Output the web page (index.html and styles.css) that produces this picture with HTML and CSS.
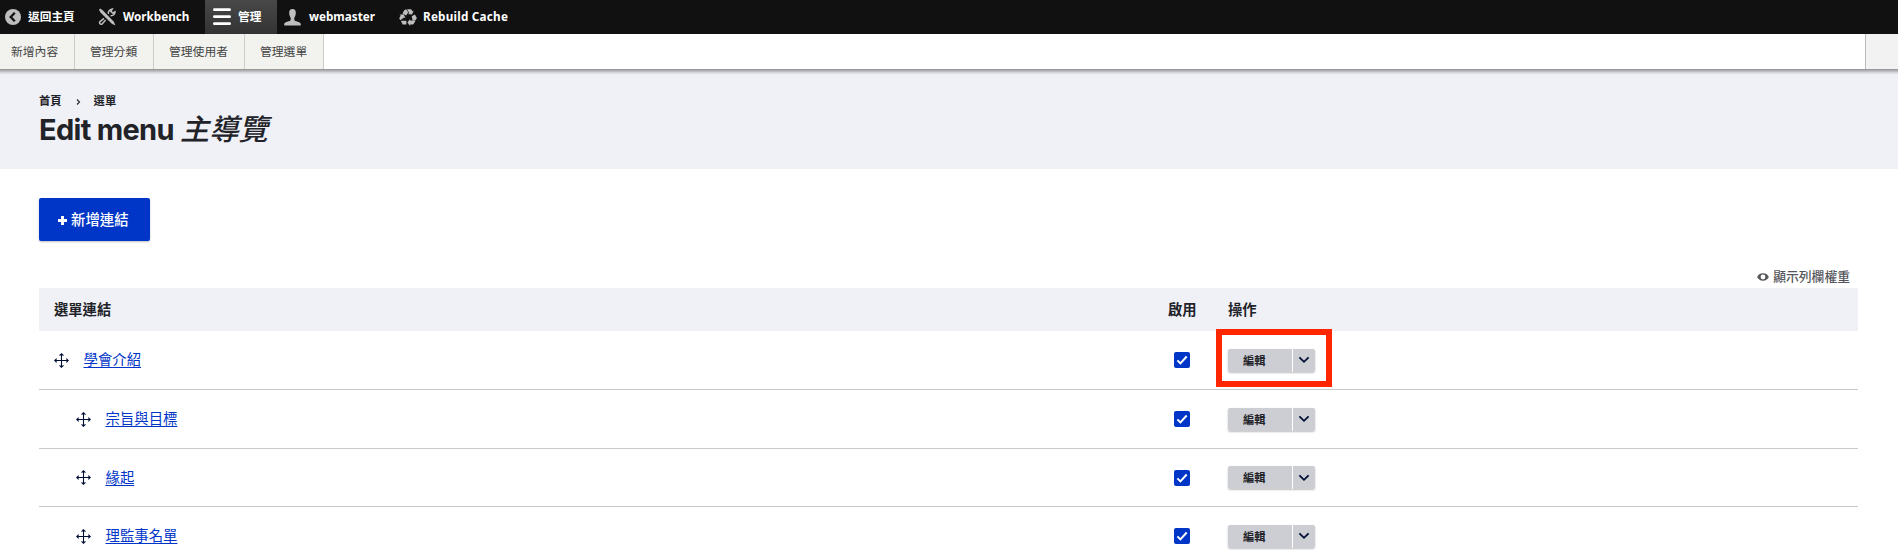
FILE: index.html
```
<!DOCTYPE html>
<html lang="zh-Hant">
<head>
<meta charset="utf-8">
<title>Edit menu 主導覽</title>
<link rel="stylesheet" href="styles.css">
</head>
<body>
<svg class="defs" width="0" height="0">
  <symbol id="move" viewBox="0 0 16 16"><path d="M8 .9v14.2M.9 8h14.2M5.9 2.9 8 .8l2.1 2.1M5.9 13.1 8 15.2l2.1-2.1M2.9 5.9.8 8l2.1 2.1M13.1 5.9 15.2 8l-2.1 2.1" fill="none" stroke="#000f33" stroke-width="1.15"/></symbol>
  <symbol id="check" viewBox="0 0 16 16"><path d="m3.4 8.4 3 3 6.3-6.9" fill="none" stroke="#fff" stroke-width="2"/></symbol>
  <symbol id="chevron" viewBox="0 0 12 8"><path d="m1.4 1.3 4.6 4.5 4.6-4.5" fill="none" stroke="#000f33" stroke-width="1.8"/></symbol>
</svg>
<nav class="bar">
  <a class="tab back"><svg width="16" height="16" viewBox="0 0 16 16"><circle cx="8" cy="8" r="8" fill="#bebebe"/><path d="M9.8 3.8 5.7 8l4.1 4.2" fill="none" stroke="#111" stroke-width="2.3"/></svg><span>返回主頁</span></a>
  <a class="tab bench"><svg width="18" height="18" viewBox="0 0 18 18" fill="none" stroke="#bebebe"><path d="M10.3 6.200C10 3.500 11.500 1.300 14.300 1L12.900 3.400l1.700 1.700 2.400-1.300c.1 2.400-1.900 4.200-4.500 3.900M6 10.400l-4 3.200c-1.500 1.300.8 3.700 2.100 2.300L7.600 12" stroke-width="1.500"/><path d="m1 1.800 1.300-1.200 2.600 1.800 11 11.300 1.500 3.700-3.600-1.600L2.500 4.500z" fill="#bebebe" stroke="#111" stroke-width="2.200" paint-order="stroke"/></svg><span>Workbench</span></a>
  <a class="tab manage"><svg width="18" height="18" viewBox="0 0 18 18"><path d="M1.4 1.700h15.200M1.400 8.700h15.200M1.400 15.700h15.200" stroke="#fff" stroke-width="2.800" stroke-linecap="round"/></svg><span>管理</span></a>
  <a class="tab user"><svg width="17" height="17" viewBox="0 0 17 17" fill="#bebebe"><path d="M8.500 0C11 0 12 1.800 11.800 4.200c-.1 2.100-.8 3.400-1.500 4.500v2.200c.5 1.500 5.200 1.600 6.200 3.300.3.600.4 1.500.3 2.300H.2c-.1-.8 0-1.700.3-2.300 1-1.700 5.700-1.800 6.200-3.300V8.700C6 7.600 5.300 6.300 5.200 4.200 5 1.800 6 0 8.500 0z"/></svg><span>webmaster</span></a>
  <a class="tab cache"><svg width="18" height="17" viewBox="0 0 18 17" fill="#bebebe"><path d="M5.200 1.200 7.200.3l2 2.900-2 3.200-3.700-2z"/><path d="M8 .2h4.200l1.200 2 1.300-.7-1.600 4.100-4.400-.5 1.600-.9z"/><path d="m12.700 7.200 3.200-1.800 2 3.500-1.500 2.500h-2.800z"/><path d="M16.300 12.200 14.200 15.600h-3.100V17l-2.700-3.400 2.700-3.500v1.500h4.300z"/><path d="M7.400 11.800v3.800H3.700L1.900 12l.8-.3z"/><path d="m1.400 11.300-1.200-2 1.500-2.800-1.300-.8 4.300-.5 1.800 4-1.500-.8z"/></svg><span>Rebuild Cache</span></a>
</nav>
<nav class="tray">
  <a class="t1">新增內容</a><a class="t2">管理分類</a><a class="t3">管理使用者</a><a class="t4">管理選單</a>
  <span class="toggle"></span>
</nav>
<header class="head">
  <div class="crumbs"><span>首頁</span><svg width="5" height="6" viewBox="0 0 5 6"><path d="m1 .5 2.500 2.500L1 5.500" fill="none" stroke="#222330" stroke-width="1.100"/></svg><span>選單</span></div>
  <h1>Edit menu <em>主導覽</em></h1>
</header>
<main>
  <a class="add"><svg width="9" height="9" viewBox="0 0 9 9"><path d="M4.500 0v9M0 4.500h9" stroke="#fff" stroke-width="2.900"/></svg><span>新增連結</span></a>
  <div class="weights"><svg width="12" height="8" viewBox="0 0 12 8"><path fill="#55565b" fill-rule="evenodd" d="M6 .3C3 .3 1 2 .2 4 1 6 3 7.700 6 7.700S11 6 11.800 4C11 2 9 .3 6 .3zm0 1.300a2.400 2.400 0 1 1 0 4.800 2.400 2.400 0 0 1 0-4.800z"/></svg><span>顯示列欄權重</span></div>
  <div class="table">
    <div class="row th"><div>選單連結</div><div>啟用</div><div>操作</div></div>
    <div class="row">
      <div class="name"><svg class="mv"><use href="#move"/></svg><a>學會介紹</a></div>
      <div><span class="cb"><svg><use href="#check"/></svg></span></div>
      <div class="ops"><span class="edit">編輯</span><span class="drop"><svg><use href="#chevron"/></svg></span><i class="highlight"></i></div>
    </div>
    <div class="row">
      <div class="name child"><svg class="mv"><use href="#move"/></svg><a>宗旨與目標</a></div>
      <div><span class="cb"><svg><use href="#check"/></svg></span></div>
      <div class="ops"><span class="edit">編輯</span><span class="drop"><svg><use href="#chevron"/></svg></span></div>
    </div>
    <div class="row short">
      <div class="name child"><svg class="mv"><use href="#move"/></svg><a>緣起</a></div>
      <div><span class="cb"><svg><use href="#check"/></svg></span></div>
      <div class="ops"><span class="edit">編輯</span><span class="drop"><svg><use href="#chevron"/></svg></span></div>
    </div>
    <div class="row">
      <div class="name child"><svg class="mv"><use href="#move"/></svg><a>理監事名單</a></div>
      <div><span class="cb"><svg><use href="#check"/></svg></span></div>
      <div class="ops"><span class="edit">編輯</span><span class="drop"><svg><use href="#chevron"/></svg></span></div>
    </div>
  </div>
</main>
</body>
</html>
```
FILE: styles.css
```
* { box-sizing: border-box; }
html, body { margin: 0; height: 554px; overflow: hidden; }
body { background: #fff; color: #222328; font-family: Inter, "Noto Sans CJK TC", sans-serif; }
svg { display: block; flex: none; }
.defs { position: absolute; }
.bar { display: flex; height: 34px; background: #111; color: #fff; font: bold 11.7px/34px "Noto Sans", "Noto Sans CJK TC", sans-serif; white-space: nowrap; }
.tab { display: flex; align-items: center; }
.tab span { height: 34px; line-height: 32px; }
.back { width: 89px; padding-left: 5px; gap: 7px; }
.bench { width: 116px; padding-left: 9px; gap: 7px; }
.manage { width: 72px; padding-left: 8px; gap: 7px; background: linear-gradient(#484848, #333); }
.user { width: 113px; padding-left: 7px; gap: 8px; }
.cache { padding-left: 9px; gap: 6px; letter-spacing: .23px; }
.tray { display: flex; height: 36px; border-bottom: 1px solid #999; background: #fff; box-shadow: 0 0 3px 2px rgba(0,0,0,.33); position: relative; clip-path: inset(0 0 -8px 0); font: 11.8px/33px "Noto Sans CJK TC", sans-serif; color: #444; }
.tray a { background: #f2f3ef; border-right: 1px solid #ccc; padding-left: 11px; white-space: nowrap; }
.t1 { width: 75px; }
.t2, .t4 { width: 79px; }
.tray .t2, .tray .t3, .tray .t4 { padding-left: 15px; }
.t3 { width: 91px; }
.toggle { width: 33px; margin-left: auto; background: #f2f2f2; border-left: 1px solid #bbb; }
.head { height: 99px; padding: 22px 0 0 39px; background: #f0f1f7; }
.crumbs { display: flex; align-items: center; height: 18px; font: bold 11.3px/18px Inter, "Noto Sans CJK TC", sans-serif; }
.crumbs svg { margin: 1px 13px 0 14px; }
h1 { margin: 0; padding-top: 1px; font: 700 29px/38px Inter, "Noto Sans CJK TC", sans-serif; letter-spacing: -.7px; white-space: nowrap; }
em { font-weight: 500; font-size: 29.3px; letter-spacing: 0; }
main { display: flex; flex-direction: column; padding: 29px 40px 0 39px; }
.add { display: flex; align-items: center; gap: 4px; width: 111px; height: 43px; padding-left: 19px; border-radius: 2px; background: #0036c7; color: #fff; font: 500 14.4px/41px "Noto Sans CJK TC", sans-serif; box-shadow: 0 1px 2px rgba(0,0,0,.25); }
.add svg { margin-top: 2px; }
.add span { height: 43px; }
.weights { display: flex; align-items: center; align-self: flex-end; gap: 4px; height: 22px; margin: 25px 8px 0 0; font: 500 12.8px/20px "Noto Sans CJK TC", sans-serif; color: #55565b; }
.weights span { height: 22px; }
.row { display: grid; grid-template-columns: 1135px 54px 1fr; align-items: center; height: 59px; border-bottom: 1px solid #c9cacf; }
.short { height: 58px; }
.th { height: 43px; border: 0; background: #f0f1f7; font: bold 14.3px/41px "Noto Sans CJK TC", sans-serif; }
.th > div { height: 43px; }
.th > div:first-child { padding-left: 15px; }
.th > div:nth-child(2) { margin-left: -6px; }
.name { display: flex; align-items: center; padding-left: 15px; font: 14.4px/20px "Noto Sans CJK TC", sans-serif; }
.child { padding-left: 37px; }
.mv { width: 15px; height: 15px; margin-right: 14.5px; }
.name a { padding-bottom: 2px; color: #0036c7; text-decoration: underline; text-underline-offset: 2px; }
.cb { display: flex; width: 16px; height: 16px; border-radius: 2px; background: #0036c7; }
.cb svg { width: 16px; height: 16px; }
.ops { position: relative; display: flex; width: 87px; height: 23px; border-radius: 2px; box-shadow: 0 1px 2px rgba(0,0,0,.25); }
.edit { width: 64px; margin-right: 1px; padding-left: 15px; border-radius: 2px 0 0 2px; background: #ccced4; font: bold 11.2px/22px "Noto Sans CJK TC", sans-serif; }
.drop { display: grid; place-items: center; width: 22px; border-radius: 0 2px 2px 0; background: #ccced4; }
.drop svg { width: 12px; height: 8px; }
.highlight { position: absolute; left: -12px; top: -20px; width: 116px; height: 58px; border: 6px solid #ff2600; }
```
